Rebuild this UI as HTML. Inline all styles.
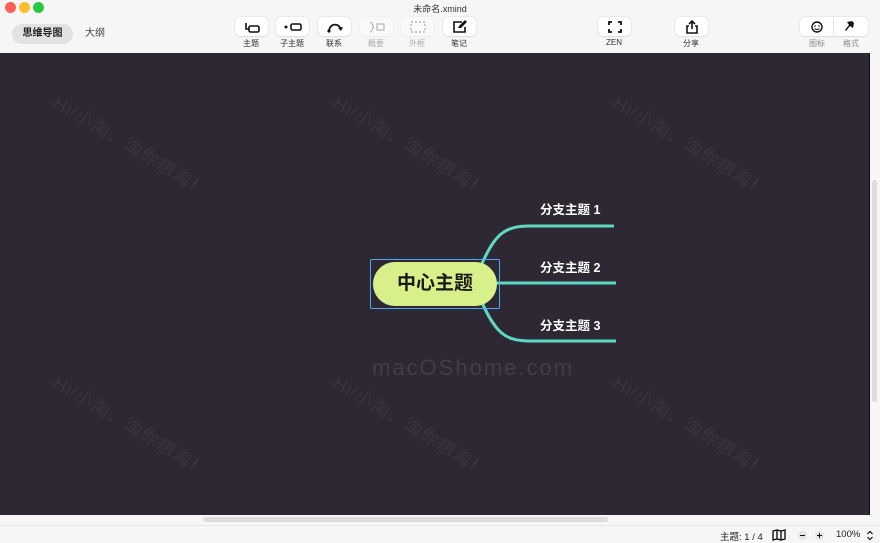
<!DOCTYPE html><html><head><meta charset="utf-8"><style>
*{margin:0;padding:0;box-sizing:border-box}
body{width:880px;height:543px;overflow:hidden;background:#f6f6f6;font-family:"Liberation Sans","Noto Sans CJK SC",sans-serif;position:relative}
.a{position:absolute}
.dot{width:11px;height:11px;border-radius:50%;top:2px}
.btn{position:absolute;top:17px;width:33px;height:19px;background:#fff;border-radius:5px;box-shadow:0 0 0 .5px #ddd,0 1px 1px #ddd;display:flex;align-items:center;justify-content:center}
.lbl{position:absolute;top:38px;font-size:8px;color:#333;width:50px;text-align:center}
.wm{position:absolute;color:#3b3541;font-size:18px;transform:rotate(31deg);transform-origin:0 0;white-space:nowrap;letter-spacing:1px}
.br{position:absolute;color:#fff;font-weight:bold;font-size:12.5px}
</style></head><body>
<div class="a dot" style="left:5px;background:#fe5f57"></div>
<div class="a dot" style="left:19px;background:#febc2e"></div>
<div class="a dot" style="left:33px;background:#28c840"></div>
<div class="a" style="left:0;width:880px;top:2px;text-align:center;font-size:9px;color:#333">未命名.xmind</div>
<div class="a" style="left:12px;top:24px;width:61px;height:20px;background:#e2e2e2;border-radius:10px;font-size:10px;font-weight:bold;color:#222;text-align:center;line-height:20px">思维导图</div>
<div class="a" style="left:85px;top:24px;font-size:10px;color:#444;line-height:20px">大纲</div>

<div class="btn" style="left:235px"><svg width="16" height="12"><rect x="5" y="5" width="10" height="6" rx="1.5" fill="none" stroke="#111" stroke-width="1.6"/><path d="M2 2v6h3" fill="none" stroke="#111" stroke-width="1.6"/></svg></div>
<div class="btn" style="left:276px"><svg width="18" height="10"><circle cx="2" cy="5" r="1.5" fill="#111"/><rect x="7" y="2" width="10" height="6" rx="1.5" fill="none" stroke="#111" stroke-width="1.6"/></svg></div>
<div class="btn" style="left:318px"><svg width="18" height="12"><path d="M3 9C5 2 12 2 15 8" fill="none" stroke="#111" stroke-width="1.8"/><circle cx="3" cy="10" r="1.6" fill="#111"/><path d="M12 7l3 3 2-4z" fill="#111"/></svg></div>
<div class="btn" style="left:360px;opacity:.4"><svg width="18" height="12"><path d="M2 1c3 0 2 5 4 5-2 0-1 5-4 5" fill="none" stroke="#555" stroke-width="1.2"/><rect x="9" y="3" width="7" height="6" fill="none" stroke="#555" stroke-width="1.2"/></svg></div>
<div class="btn" style="left:401px;opacity:.4"><svg width="16" height="12"><rect x="1" y="1" width="14" height="10" fill="none" stroke="#555" stroke-width="1.4" stroke-dasharray="2 2"/></svg></div>
<div class="btn" style="left:443px"><svg width="16" height="13"><path d="M10 2H2v10h11V7" fill="none" stroke="#111" stroke-width="1.6"/><path d="M6 8l1-2 6-6 2 2-6 6z" fill="#111"/></svg></div>
<div class="lbl" style="left:226px">主题</div><div class="lbl" style="left:267px">子主题</div><div class="lbl" style="left:309px">联系</div><div class="lbl" style="left:351px;color:#aaa">概要</div><div class="lbl" style="left:392px;color:#aaa">外框</div><div class="lbl" style="left:434px">笔记</div>

<div class="btn" style="left:598px"><svg width="14" height="12"><path d="M1 4V1h3M10 1h3v3M13 8v3h-3M4 11H1V8" fill="none" stroke="#111" stroke-width="1.8"/></svg></div>
<div class="btn" style="left:675px"><svg width="14" height="14"><path d="M4 6H2v7h10V6h-2M7 9V1M4 4l3-3 3 3" fill="none" stroke="#111" stroke-width="1.6"/></svg></div>
<div class="lbl" style="left:589px">ZEN</div><div class="lbl" style="left:666px">分享</div>
<div class="btn" style="left:800px;width:68px"><svg width="68" height="19"><circle cx="17" cy="10" r="5" fill="none" stroke="#111" stroke-width="1.4"/><circle cx="15" cy="9" r=".8" fill="#111"/><circle cx="19" cy="9" r=".8" fill="#111"/><path d="M14.5 11.5q2.5 2 5 0" fill="none" stroke="#111" stroke-width="1"/><line x1="33.5" y1="1" x2="33.5" y2="18" stroke="#e5e5e5"/><path d="M47 5l5-1 2 2-1 5-3-2-4 5-1-1 4-5z" fill="#111"/></svg></div>
<div class="lbl" style="left:792px;color:#888">图标</div><div class="lbl" style="left:826px;color:#888">格式</div>

<div class="a" style="left:0;top:53px;width:870px;height:462px;background:#2d2833;overflow:hidden;border-right:1px solid #111">
<div class="wm" style="left:62px;top:36px">Hi/小淘，淘你想淘！</div>
<div class="wm" style="left:342px;top:36px">Hi/小淘，淘你想淘！</div>
<div class="wm" style="left:622px;top:36px">Hi/小淘，淘你想淘！</div>
<div class="wm" style="left:62px;top:316px">Hi/小淘，淘你想淘！</div>
<div class="wm" style="left:342px;top:316px">Hi/小淘，淘你想淘！</div>
<div class="wm" style="left:622px;top:316px">Hi/小淘，淘你想淘！</div>
<div class="a" style="left:372px;top:302px;font-size:22px;color:#433d49;letter-spacing:2px">macOShome.com</div>
<svg class="a" style="left:0;top:0" width="870" height="462"><g fill="none" stroke="#5fd8c3" stroke-width="3"><path d="M480 215C495 180 505 173 530 173H614"/><path d="M495 230H616"/><path d="M480 245C495 280 505 288 530 288H616"/></g></svg>
<div class="a" style="left:370px;top:206px;width:130px;height:50px;border:1.5px solid #4aa8f0;border-radius:2px"></div>
<div class="a" style="left:373px;top:209px;width:124px;height:44px;background:#d8f08a;border-radius:22px;text-align:center;line-height:44px;font-size:19px;font-weight:bold;color:#1a1a1a">中心主题</div>
<div class="br" style="left:540px;top:146px">分支主题 1</div>
<div class="br" style="left:540px;top:204px">分支主题 2</div>
<div class="br" style="left:540px;top:262px">分支主题 3</div>
</div>
<div class="a" style="left:872px;top:180px;width:5px;height:222px;background:#ddd;border-radius:3px"></div>
<div class="a" style="left:203px;top:517px;width:405px;height:5px;background:#ddd;border-radius:3px"></div>
<div class="a" style="left:0;top:525px;width:880px;border-top:1px solid #e8e8e8"></div>
<div class="a" style="left:720px;top:529px;font-size:9.5px;color:#222">主题: 1 / 4</div>
<svg class="a" style="left:772px;top:529px" width="14" height="12"><path d="M1 2l4-1 4 1 4-1v9l-4 1-4-1-4 1zM5 1v9M9 2v9" fill="none" stroke="#111" stroke-width="1.4"/></svg>
<div class="a" style="left:798px;top:531px;width:9px;height:9px;border-radius:50%;background:#e4e4e4"></div><div class="a" style="left:800px;top:535px;width:5px;height:1.3px;background:#111"></div>
<div class="a" style="left:815px;top:531px;width:9px;height:9px;border-radius:50%;background:#e4e4e4"></div><div class="a" style="left:817px;top:535px;width:5px;height:1.3px;background:#111"></div><div class="a" style="left:819px;top:533px;width:1.3px;height:5px;background:#111"></div>
<div class="a" style="left:836px;top:529px;font-size:9.5px;color:#222">100%</div>
<svg class="a" style="left:866px;top:530px" width="8" height="11"><path d="M1.5 4l2.5-2.5L6.5 4M1.5 7l2.5 2.5L6.5 7" fill="none" stroke="#111" stroke-width="1.2"/></svg>
</body></html>
